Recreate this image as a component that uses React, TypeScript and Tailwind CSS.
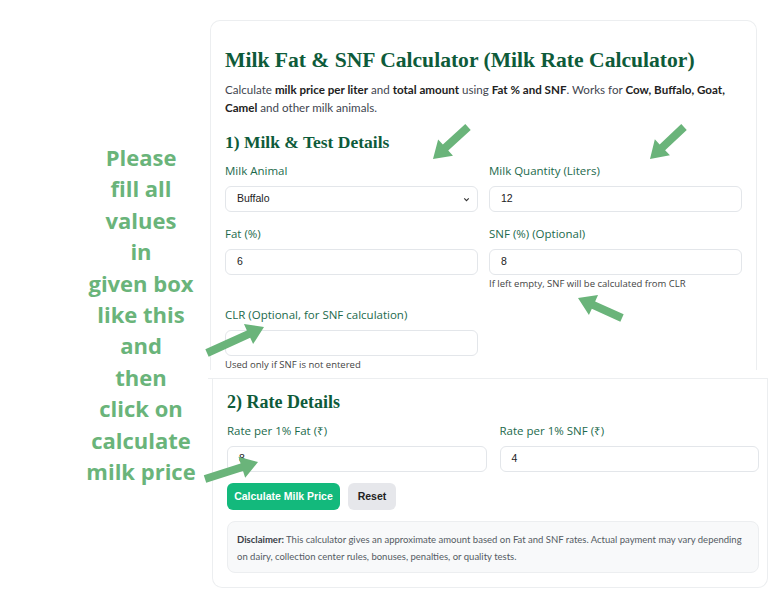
import React from "react";

const body = { fontFamily: '"Open Sans", "Noto Sans", sans-serif' };
const lato = { fontFamily: 'Lato, "Open Sans", sans-serif' };
const serif = { fontFamily: '"Liberation Serif", "DejaVu Serif", serif' };
const arial = { fontFamily: '"Liberation Sans", Arial, sans-serif' };

function Arrow({ x1, y1, x2, y2 }: { x1: number; y1: number; x2: number; y2: number }) {
  const dx = x2 - x1;
  const dy = y2 - y1;
  const len = Math.hypot(dx, dy);
  const ux = dx / len;
  const uy = dy / len;
  const nx = -uy;
  const ny = ux;
  const w = 4;
  const hw = 11;
  const hl = 17;
  const bx = x2 - ux * hl;
  const by = y2 - uy * hl;
  const pts = [
    [x1 + nx * w, y1 + ny * w],
    [bx + nx * w, by + ny * w],
    [bx + nx * hw, by + ny * hw],
    [x2, y2],
    [bx - nx * hw, by - ny * hw],
    [bx - nx * w, by - ny * w],
    [x1 - nx * w, y1 - ny * w],
  ]
    .map((p) => p.join(","))
    .join(" ");
  return <polygon points={pts} fill="#6ab47a" />;
}

function Field({
  label,
  value,
  select,
  help,
}: {
  label: string;
  value: string;
  select?: boolean;
  help?: string;
}) {
  return (
    <div className="flex flex-col">
      <label className="text-[11.5px] leading-[15px] text-[#1c6a4c] mb-[8px]" style={body}>
        {label}
      </label>
      <div
        className="h-[26px] border border-[#e3e6ea] rounded-[6px] bg-white flex items-center justify-between pl-[11px] pr-[6px] text-[10.5px] text-[#222]"
        style={arial}
      >
        <span>{value}</span>
        {select && (
          <svg width="9" height="9" viewBox="0 0 24 24" fill="none" stroke="#333" strokeWidth="3">
            <path d="M6 9l6 6 6-6" />
          </svg>
        )}
      </div>
      {help && (
        <div className="mt-[3px] text-[9.5px] leading-[12px] text-[#444]" style={body}>
          {help}
        </div>
      )}
    </div>
  );
}

export default function App() {
  const note = [
    "Please",
    "fill all",
    "values",
    "in",
    "given box",
    "like this",
    "and",
    "then",
    "click on",
    "calculate",
    "milk price",
  ];

  return (
    <div className="relative w-[768px] h-[614px] bg-white overflow-hidden flex">
      <div className="w-[208px] pl-[78px] pt-[142px]">
        <div
          className="w-[126px] text-center text-[22px] leading-[31.4px] font-bold text-[#6ab47a]"
          style={body}
        >
          {note.map((l) => (
            <div key={l}>{l}</div>
          ))}
        </div>
      </div>

      <div className="w-[560px] flex flex-col">
        <div className="h-[370px] pt-[20px] pl-[2px] pr-[11px]">
          <div className="h-[350px] border border-b-0 border-[#eceef0] rounded-t-[10px] px-[14px] pt-[22px]">
            <h1 className="text-[21.6px] leading-[34px] font-bold text-[#0e5b3a] whitespace-nowrap" style={serif}>
              Milk Fat &amp; SNF Calculator (Milk Rate Calculator)
            </h1>
            <p className="mt-[4px] text-[11.6px] leading-[18px] text-[#3f4650]" style={lato}>
              Calculate <b className="text-[#222]">milk price per liter</b> and{" "}
              <b className="text-[#222]">total amount</b> using <b className="text-[#222]">Fat % and SNF</b>. Works for{" "}
              <b className="text-[#222]">Cow, Buffalo, Goat, Camel</b> and other milk animals.
            </p>
            <h2 className="mt-[13px] text-[17.5px] leading-[24px] font-bold text-[#0e5b3a]" style={serif}>
              1) Milk &amp; Test Details
            </h2>
            <div className="mt-[9px] grid grid-cols-2 gap-x-[11px] items-start">
              <Field label="Milk Animal" value="Buffalo" select />
              <Field label="Milk Quantity (Liters)" value="12" />
            </div>
            <div className="mt-[14px] grid grid-cols-2 gap-x-[11px] items-start">
              <Field label="Fat (%)" value="6" />
              <Field label="SNF (%) (Optional)" value="8" help="If left empty, SNF will be calculated from CLR" />
            </div>
            <div className="mt-[17px] grid grid-cols-2 gap-x-[11px] items-start">
              <Field label="CLR (Optional, for SNF calculation)" value="" help="Used only if SNF is not entered" />
            </div>
          </div>
        </div>

        <div className="mt-[8px] border-t border-[#eceef0] pl-[4px]">
          <div className="h-[209px] border border-t-0 border-[#eceef0] rounded-b-[10px] pl-[14px] pr-[8px] pt-[10px]">
            <h2 className="text-[18px] leading-[26px] font-bold text-[#0e5b3a]" style={serif}>
              2) Rate Details
            </h2>
            <div className="mt-[8px] grid grid-cols-2 gap-x-[13px]">
              <Field label="Rate per 1% Fat (₹)" value="8" />
              <Field label="Rate per 1% SNF (₹)" value="4" />
            </div>
            <div className="mt-[11px] flex gap-[8px]" style={arial}>
              <button className="h-[27px] w-[113px] rounded-[6px] bg-[#13b97c] text-white text-[10.5px] font-bold">
                Calculate Milk Price
              </button>
              <button className="h-[27px] w-[48px] rounded-[6px] bg-[#e6e7eb] text-[#222] text-[10.5px] font-bold">
                Reset
              </button>
            </div>
            <div
              className="mt-[11px] h-[52px] border border-[#eceef0] rounded-[8px] bg-[#f8f9fa] px-[9px] pt-[9px] text-[9.5px] leading-[17px] text-[#555b63]"
              style={lato}
            >
              <b className="text-[#3a4048]">Disclaimer:</b> This calculator gives an approximate amount based on Fat and
              SNF rates. Actual payment may vary depending on dairy, collection center rules, bonuses, penalties, or
              quality tests.
            </div>
          </div>
        </div>
      </div>

      <svg className="absolute inset-0 pointer-events-none" width="768" height="614" viewBox="0 0 768 614">
        <Arrow x1={468} y1={127} x2={433} y2={159} />
        <Arrow x1={684} y1={127} x2={650} y2={159} />
        <Arrow x1={622} y1={318} x2={578} y2={298} />
        <Arrow x1={207} y1={353} x2={264} y2={327} />
        <Arrow x1={205} y1={479} x2={258} y2={462} />
      </svg>
    </div>
  );
}
